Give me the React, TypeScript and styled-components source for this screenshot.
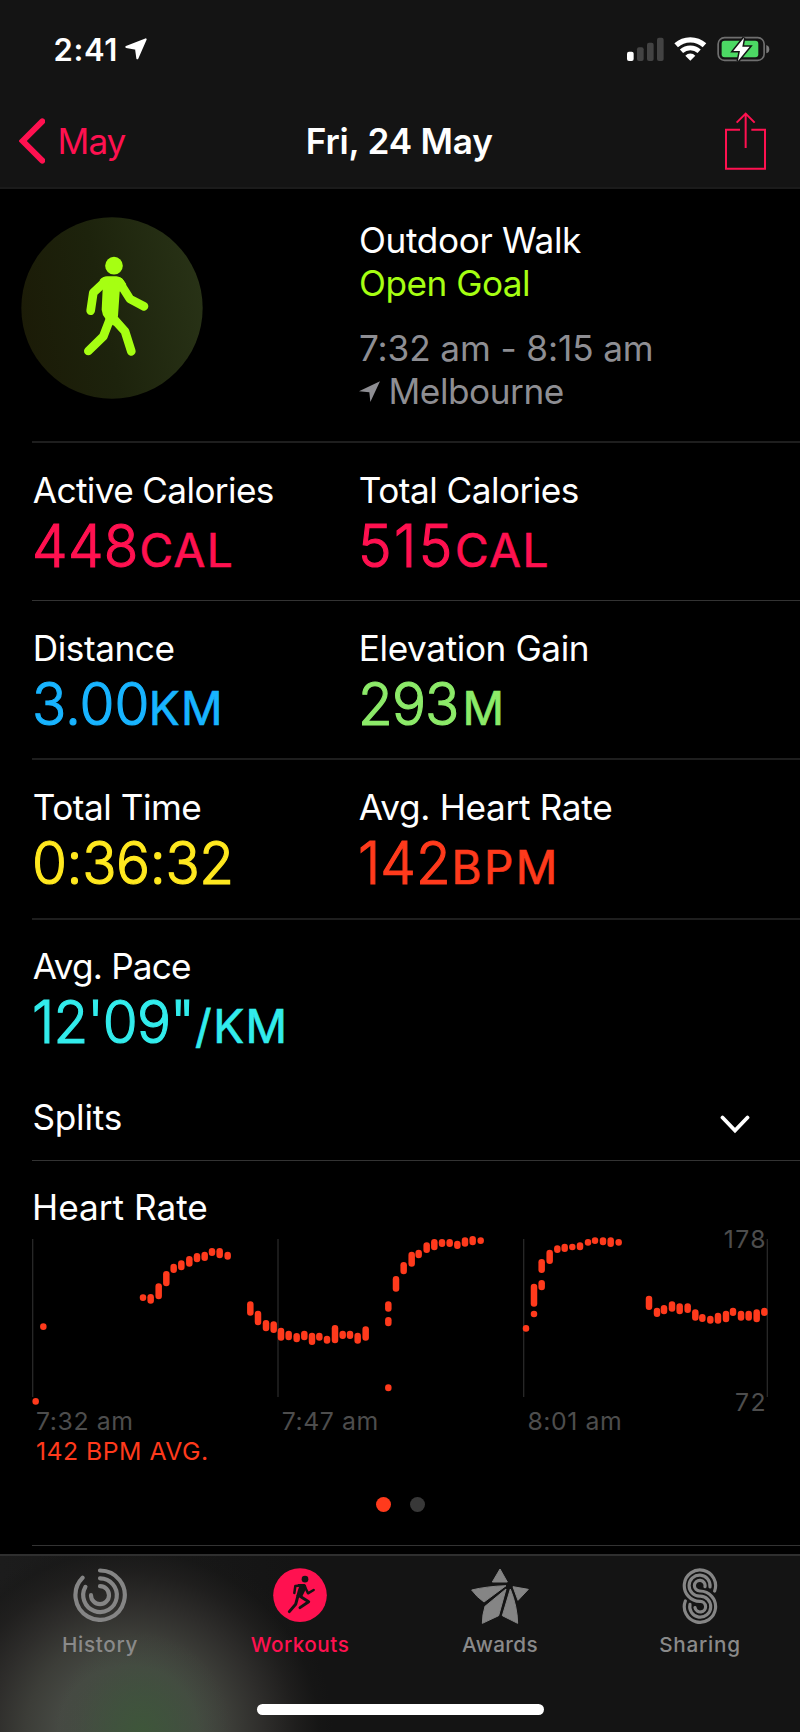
import React from "react";
import styled, { createGlobalStyle } from "styled-components";

const GlobalStyle = createGlobalStyle`
  * { box-sizing: border-box; }
  body { margin: 0; background: #000; }
`;

const Screen = styled.div`
  width: 800px;
  height: 1732px;
  overflow: hidden;
  display: flex;
  flex-direction: column;
  background: #000;
  color: #fff;
  font-family: Inter, "Liberation Sans", sans-serif;
  font-size: 35.2px;
  line-height: 43px;
  white-space: nowrap;
`;

/* ---------- header ---------- */

const Header = styled.header`
  height: 189px;
  flex: none;
  background: #141414;
  border-bottom: 2px solid #1b1b1b;
`;

const StatusBar = styled.div`
  height: 98px;
  padding: 0 30px 0 53.5px;
  display: flex;
  align-items: center;
  justify-content: space-between;
`;

const Clock = styled.div`
  display: flex;
  align-items: center;
  gap: 7px;
  font-size: 31px;
  font-weight: 600;
  letter-spacing: 0.6px;
`;

const NavBar = styled.nav`
  height: 86px;
  padding: 0 34px 0 18.5px;
  display: grid;
  grid-template-columns: 1fr auto 1fr;
  align-items: center;
`;

const BackButton = styled.a`
  display: flex;
  align-items: center;
  gap: 12.5px;
  color: #ff1150;
  letter-spacing: -1px;
`;

const NavTitle = styled.h1`
  margin: 0 0 0 14px;
  font-size: inherit;
  font-weight: 600;
  letter-spacing: -0.22px;
`;

const ShareButton = styled.a`
  display: flex;
  justify-content: flex-end;
`;

/* ---------- workout summary ---------- */

const Summary = styled.section`
  height: 252px;
  padding: 28px 0 0 21px;
  display: grid;
  grid-template-columns: 338px 1fr;
  align-items: start;
`;

const SummaryText = styled.div`
  padding-top: 2px;
`;

const SummaryLine = styled.div<{ $color?: string; $gap?: number; $ls?: number }>`
  display: flex;
  align-items: center;
  color: ${(p) => p.$color ?? "#fff"};
  margin-top: ${(p) => p.$gap ?? 0}px;
  letter-spacing: ${(p) => p.$ls ?? -0.35}px;
`;

const Place = styled.span`
  margin-left: 8.5px;
`;

const Divider = styled.hr<{ $thick?: boolean }>`
  flex: none;
  height: ${(p) => (p.$thick ? 2 : 1)}px;
  margin: 0 0 0 32px;
  border: 0;
  background: ${(p) => (p.$thick ? "#1e1e1e" : "#333")};
`;

/* ---------- metrics ---------- */

const MetricRow = styled.section<{ $height: number; $pad: number }>`
  height: ${(p) => p.$height}px;
  padding: ${(p) => p.$pad}px 0 0 32px;
  display: grid;
  grid-template-columns: 326px 1fr;
  align-items: start;
`;

const MetricLabel = styled.div<{ $ls: number }>`
  padding-left: 0.8px;
  letter-spacing: ${(p) => p.$ls}px;
`;

const MetricValue = styled.div<{ $color: string }>`
  margin-top: 3px;
  line-height: 60px;
  font-size: 59.6px;
  font-weight: 300;
  color: ${(p) => p.$color};
  -webkit-text-stroke: 1.2px ${(p) => p.$color};
`;

const Digits = styled.span<{ $ls: number }>`
  display: inline-block;
  transform: scaleX(0.95);
  transform-origin: left;
  letter-spacing: ${(p) => p.$ls}px;
`;

const Unit = styled.span<{ $ls: number; $gap: number }>`
  margin-left: ${(p) => p.$gap}px;
  font-size: 46px;
  font-weight: 400;
  -webkit-text-stroke-width: 0.7px;
  letter-spacing: ${(p) => p.$ls}px;
`;

const SplitsRow = styled.section`
  height: 86px;
  padding: 0 50px 0 32.4px;
  display: flex;
  align-items: center;
  justify-content: space-between;
  letter-spacing: -0.2px;
`;

const ChevronDown = styled.svg`
  margin-top: 14px;
`;

/* ---------- heart rate chart ---------- */

const HeartRate = styled.section`
  height: 384px;
  padding-top: 25px;
`;

const SectionTitle = styled.h2`
  margin: 0 0 0 32px;
  font-size: inherit;
  font-weight: 400;
`;

const ChartArea = styled.div`
  height: 177px;
  display: grid;
  > * { grid-area: 1 / 1; }
`;

const ScaleLabels = styled.div`
  margin: -5px 33px -11px 0;
  display: flex;
  flex-direction: column;
  justify-content: space-between;
  text-align: right;
  font-size: 24.8px;
  line-height: 30px;
  letter-spacing: 1.4px;
  color: #4d4d4d;
`;

const TimeAxis = styled.div`
  padding-left: 36px;
  display: grid;
  grid-template-columns: 245.7px 245.7px 1fr;
  font-size: 24.8px;
  line-height: 30px;
  letter-spacing: 0.6px;
  color: #4d4d4d;
`;

const AverageLabel = styled.div`
  padding-left: 36px;
  font-size: 24.8px;
  line-height: 30px;
  letter-spacing: 0.47px;
  color: #ff3a1c;
`;

const PageDots = styled.div`
  margin-top: 31px;
  display: flex;
  justify-content: center;
  gap: 19px;
`;

const PageDot = styled.i<{ $active?: boolean }>`
  width: 15px;
  height: 15px;
  border-radius: 50%;
  background: ${(p) => (p.$active ? "#ff3a1c" : "#383838")};
`;

/* ---------- tab bar ---------- */

const TabBar = styled.footer`
  margin-top: auto;
  height: 178px;
  flex: none;
  border-top: 2px solid #2f2f2f;
  background:
    radial-gradient(ellipse 88px 100px at 142px 176px, rgba(62, 86, 58, 1) 0%, rgba(62, 84, 60, 0.75) 35%, rgba(64, 80, 62, 0.25) 75%, rgba(66, 78, 64, 0) 100%),
    radial-gradient(ellipse 205px 195px at 128px 176px, #474a44 0%, #464943 34%, #3c3d38 50%, #2e2d2b 66%, rgba(33, 32, 31, 0.8) 82%, rgba(24, 24, 23, 0.4) 93%, rgba(20, 20, 20, 0) 100%),
    linear-gradient(90deg, #1c1c1c, #141414 300px);
`;

const Tabs = styled.div`
  height: 148px;
  padding-top: 12px;
  display: grid;
  grid-template-columns: repeat(4, 200px);
`;

const Tab = styled.a<{ $active?: boolean; $ls: number }>`
  display: flex;
  flex-direction: column;
  align-items: center;
  color: ${(p) => (p.$active ? "#ff1150" : "#8a8a8a")};
  font-size: 20.7px;
  font-weight: 500;
  line-height: 26px;
  letter-spacing: ${(p) => p.$ls}px;
`;

const TabIcon = styled.div`
  height: 64px;
`;

const HomeIndicator = styled.div`
  width: 287px;
  height: 11px;
  margin: 0 auto;
  border-radius: 6px;
  background: #fff;
`;

/* ---------- drawings ---------- */

const StatusIcons = () => (
  <svg width="143.3" height="26" viewBox="681 108 430 78">
    <rect x="681" y="155" width="20" height="28" rx="6" fill="#fff" />
    <g fill="#434343">
      <rect x="711" y="142" width="20" height="41" rx="6" />
      <rect x="741" y="128" width="20" height="55" rx="6" />
      <rect x="771" y="113" width="20" height="70" rx="6" />
    </g>
    <g fill="none" stroke="#fff">
      <path d="M828.500 136 A63 63 0 0 1 913.500 136" strokeWidth="16" />
      <path d="M844.500 154 A39 39 0 0 1 897.500 154" strokeWidth="14" />
    </g>
    <path d="M871 182 L856 167 A21 21 0 0 1 886 167 Z" fill="#fff" />
    <rect x="954.500" y="113" width="138" height="68" rx="19" fill="none" stroke="#6f6f6f" strokeWidth="5" />
    <path d="M1099 135 Q1108 138 1108 147.500 Q1108 157 1099 160 Z" fill="#7c7c7c" />
    <rect x="965" y="122" width="110" height="50" rx="9" fill="#4cd964" />
    <path d="M1032 113 L1000 153 H1020 L1014 183 L1049 140 H1027 Z" fill="#fff" stroke="#141414" strokeWidth="9" paintOrder="stroke" />
  </svg>
);

const StatusArrow = () => (
  <svg width="22" height="22" viewBox="375 114 66 66">
    <path d="M379 141 L437 118 L412 175 L408 146 Z" fill="#fff" stroke="#fff" strokeWidth="6" strokeLinejoin="round" />
  </svg>
);

const PlaceArrow = () => (
  <svg width="21" height="21" viewBox="57 546 63 63">
    <path d="M57 577 L120 547 L91 609 L88 580 Z" fill="#8e8e93" />
  </svg>
);

const BackChevron = () => (
  <svg width="26.600" height="46" viewBox="56 355 80 138">
    <path d="M126 365 L67 424 L126 483" fill="none" stroke="#ff1150" strokeWidth="18" strokeLinecap="round" strokeLinejoin="miter" />
  </svg>
);

const ShareIcon = () => (
  <svg width="41" height="58" viewBox="975 335 123 174">
    <g fill="none" stroke="#ff1150" strokeWidth="6">
      <path d="M1020 388 H978 V505 H1095 V388 H1054" />
      <path d="M1037 340 V443 M1010 367 L1037 340 L1064 367" />
    </g>
  </svg>
);

const WalkBadge = () => (
  <svg width="182" height="182" viewBox="64 52 546 546">
    <defs>
      <linearGradient id="badge" x1="0" y1="0.6" x2="1" y2="0.4">
        <stop offset="0" stopColor="#1b1b07" />
        <stop offset="0.45" stopColor="#1d230c" />
        <stop offset="1" stopColor="#283216" />
      </linearGradient>
    </defs>
    <circle cx="337" cy="325" r="272" fill="url(#badge)" />
    <g fill="#a6ff12" stroke="none">
      <circle cx="343" cy="198" r="26.500" />
      <path d="M300 241 Q310 230 322 230 H350 Q364 231 373 243 L380 254 L360 276 L355 349 L341 378 L318 358 Q307 345 306 330 L309 268 Z" />
    </g>
    <g fill="none" stroke="#a6ff12" strokeWidth="26" strokeLinecap="round" strokeLinejoin="round">
      <path d="M317 245 L281 279 L273 333" />
      <path d="M358 246 L391 298 L433 320" />
      <path d="M331 358 L311 410 L266 454" />
      <path d="M340 355 L376 395 L395 455" />
    </g>
  </svg>
);

// Each bar: centre x, top, bottom, in thirds of a pixel.
const bars: [number, number, number][] = [
  [107, 534, 554], [130, 310, 330], [429, 223, 243], [452, 222, 251], [476, 190, 238],
  [499, 153, 199], [521, 131, 159], [544, 121, 151], [568, 108, 140], [591, 99, 127],
  [614, 95, 123], [636, 84, 108], [659, 84, 115], [683, 95, 119], [751, 244, 287],
  [774, 272, 316], [798, 300, 334], [821, 304, 339], [843, 323, 362], [866, 332, 361],
  [890, 339, 367], [913, 332, 361], [936, 338, 375], [958, 338, 362], [981, 347, 371],
  [1005, 315, 370], [1028, 332, 357], [1050, 332, 357], [1073, 338, 371], [1097, 319, 362],
  [1165, 244, 275], [1165, 291, 319], [1165, 493, 514], [1188, 168, 215], [1211, 126, 163],
  [1235, 95, 140], [1256, 89, 115], [1280, 67, 99], [1303, 57, 91], [1326, 57, 81],
  [1349, 57, 81], [1372, 62, 87], [1395, 52, 80], [1418, 48, 76], [1442, 52, 72],
  [1578, 315, 335], [1602, 272, 292], [1602, 191, 260], [1625, 180, 211], [1625, 117, 159],
  [1649, 89, 132], [1672, 76, 99], [1694, 71, 96], [1717, 71, 91], [1740, 67, 91],
  [1764, 57, 77], [1785, 52, 72], [1809, 52, 76], [1832, 52, 81], [1856, 57, 77],
  [1947, 227, 270], [1971, 263, 291], [1992, 255, 283], [2016, 244, 275], [2039, 250, 283],
  [2063, 250, 279], [2086, 268, 302], [2107, 282, 306], [2131, 287, 311], [2154, 278, 311],
  [2178, 272, 307], [2199, 263, 288], [2223, 272, 302], [2246, 272, 302], [2270, 268, 307],
  [2293, 263, 288],
];

const HeartRateChart = () => (
  <svg width="800" height="177" viewBox="0 27 2400 531">
    {[98, 834, 1571, 2302].map((x) => (
      <rect key={x} x={x - 2} y="57" width="4" height="474" fill="#272727" />
    ))}
    {bars.map(([x, top, bottom], i) => (
      <rect key={i} x={x - 9.75} y={top} width="19.5" height={bottom - top} rx="9.75" fill="#ff3a1c" />
    ))}
  </svg>
);

const HistoryIcon = () => (
  <svg width="54" height="54.3" viewBox="220 265 162 163">
    <g fill="none" stroke="#858585" strokeWidth="12.500" strokeLinecap="round">
      <path d="M301 272.500 A74 74 0 1 1 248.700 294.500" />
      <path d="M301 296 A50.500 50.500 0 1 1 257.300 321.500" />
      <path d="M301 319.500 A27 27 0 1 1 274 346.500" />
    </g>
  </svg>
);

const WorkoutsIcon = () => (
  <svg width="54" height="54.3" viewBox="819 265 162 163">
    <circle cx="900" cy="346.500" r="80.500" fill="#ff1150" />
    <g fill="#141414">
      <circle cx="915" cy="298.500" r="10" />
      <path d="M893 313 H914 Q921 317 918 328 L906 352 L889 350 Q892 335 897 322 Z" />
    </g>
    <g fill="none" stroke="#141414" strokeLinecap="round" strokeLinejoin="round">
      <path d="M908 317 L886 319 L883 340" strokeWidth="7.500" />
      <path d="M914 320 L924 341 L941 331" strokeWidth="7.500" />
      <path d="M894 348 L887 374 L868 396" strokeWidth="9" />
      <path d="M899 349 L926 366 L900 384" strokeWidth="9" />
    </g>
  </svg>
);

const AwardsIcon = () => (
  <svg width="58" height="56.700" viewBox="213 265 174 170">
    <g fill="#858585" stroke="#858585" strokeWidth="3" strokeLinejoin="round">
      <path d="M300 268 L322 307 H277 Z" />
      <path d="M215 331 Q260 320 318 318 L252 367 Q230 352 215 331 Z" />
      <path d="M339 321 L385 329 L354 362 Z" />
      <path d="M255 380 L318 328 L296 408 L247 431 Q247 405 255 380 Z" />
      <path d="M331 328 Q352 380 353 431 L307 408 Z" />
    </g>
  </svg>
);

const SharingIcon = () => (
  <svg width="36" height="56" viewBox="845 262 108 168">
    <g fill="none" stroke="#858585" strokeWidth="9.500" strokeLinecap="round">
      <path d="M943 331 A47 47 0 1 0 899 362 A16 16 0 1 1 884 381" />
      <path d="M929 319 A31.500 31.500 0 1 0 899 346.500 A31.500 31.500 0 1 1 869 371" />
      <path d="M914 318 A16 16 0 1 0 899 331 A47 47 0 1 1 855 361" />
    </g>
  </svg>
);

/* ---------- page ---------- */

type MetricProps = {
  label: string;
  ls: number;
  value: string;
  valueLs: number;
  color: string;
  unit?: string;
  unitLs?: number;
  unitGap?: number;
};

const Metric = ({ label, ls, value, valueLs, color, unit, unitLs = 1.5, unitGap = 0 }: MetricProps) => (
  <div>
    <MetricLabel $ls={ls}>{label}</MetricLabel>
    <MetricValue $color={color}>
      <Digits $ls={valueLs}>{value}</Digits>
      {unit && <Unit $ls={unitLs} $gap={unitGap}>{unit}</Unit>}
    </MetricValue>
  </div>
);

export default function App() {
  return (
    <Screen>
      <GlobalStyle />
      <Header>
        <StatusBar>
          <Clock>2:41<StatusArrow /></Clock>
          <StatusIcons />
        </StatusBar>
        <NavBar>
          <BackButton><BackChevron />May</BackButton>
          <NavTitle>Fri, 24 May</NavTitle>
          <ShareButton><ShareIcon /></ShareButton>
        </NavBar>
      </Header>

      <Summary>
        <WalkBadge />
        <SummaryText>
          <SummaryLine>Outdoor Walk</SummaryLine>
          <SummaryLine $color="#a6ff12" $ls={-0.5}>Open Goal</SummaryLine>
          <SummaryLine $color="#8e8e93" $gap={22} $ls={-0.12}>7:32 am - 8:15 am</SummaryLine>
          <SummaryLine $color="#8e8e93" $ls={-0.45}><PlaceArrow /><Place>Melbourne</Place></SummaryLine>
        </SummaryText>
      </Summary>
      <Divider $thick />

      <MetricRow $height={157} $pad={26}>
        <Metric label="Active Calories" ls={-0.63} value="448" valueLs={0.3} color="#ff1150" unit="CAL" unitGap={-4.9} />
        <Metric label="Total Calories" ls={-0.53} value="515" valueLs={2.6} color="#ff1150" unit="CAL" unitGap={-5} />
      </MetricRow>
      <Divider />
      <MetricRow $height={157} $pad={26}>
        <Metric label="Distance" ls={-0.45} value="3.00" valueLs={0} color="#18b4ff" unit="KM" unitGap={-7} />
        <Metric label="Elevation Gain" ls={-0.4} value="293" valueLs={-0.9} color="#8cea69" unit="M" unitGap={-1.3} />
      </MetricRow>
      <Divider $thick />
      <MetricRow $height={158} $pad={26}>
        <Metric label="Total Time" ls={-0.5} value="0:36:32" valueLs={-0.4} color="#ffe81f" />
        <Metric label="Avg. Heart Rate" ls={-0.33} value="142" valueLs={0} color="#ff3a1c" unit="BPM" unitLs={2.4} unitGap={-4} />
      </MetricRow>
      <Divider $thick />
      <MetricRow $height={154} $pad={25}>
        <Metric label="Avg. Pace" ls={-0.85} value={"12'09\""} valueLs={-0.95} color="#32ecec" unit="/KM" unitGap={-7.5} />
      </MetricRow>

      <SplitsRow>
        Splits
        <ChevronDown width="30" height="19" viewBox="0 0 30 19">
          <path d="M2.500 2.500 L15 15.500 L27.500 2.500" fill="none" stroke="#fff" strokeWidth="3.800" strokeLinecap="round" />
        </ChevronDown>
      </SplitsRow>
      <Divider />

      <HeartRate>
        <SectionTitle>Heart Rate</SectionTitle>
        <ChartArea>
          <HeartRateChart />
          <ScaleLabels><span>178</span><span>72</span></ScaleLabels>
        </ChartArea>
        <TimeAxis><span>7:32 am</span><span>7:47 am</span><span>8:01 am</span></TimeAxis>
        <AverageLabel>142 BPM AVG.</AverageLabel>
        <PageDots><PageDot $active /><PageDot /></PageDots>
      </HeartRate>
      <Divider />

      <TabBar>
        <Tabs>
          <Tab $ls={0.68}><TabIcon><HistoryIcon /></TabIcon>History</Tab>
          <Tab $active $ls={0.51}><TabIcon><WorkoutsIcon /></TabIcon>Workouts</Tab>
          <Tab $ls={0.39}><TabIcon><AwardsIcon /></TabIcon>Awards</Tab>
          <Tab $ls={0.75}><TabIcon><SharingIcon /></TabIcon>Sharing</Tab>
        </Tabs>
        <HomeIndicator />
      </TabBar>
    </Screen>
  );
}
